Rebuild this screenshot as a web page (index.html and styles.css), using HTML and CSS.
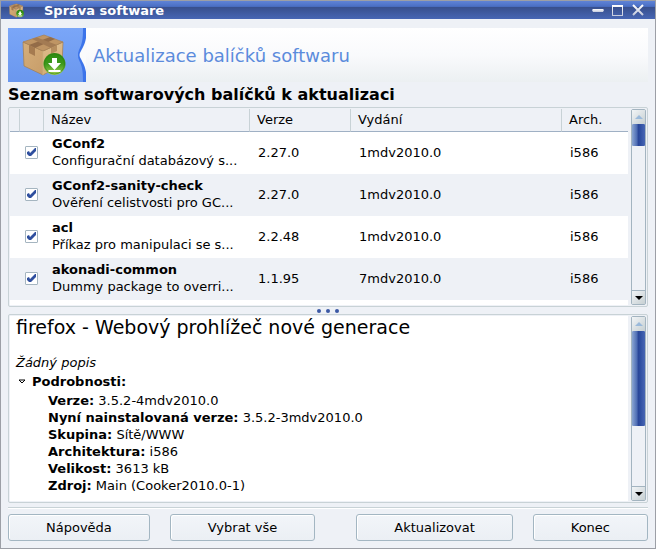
FILE: index.html
```html
<!DOCTYPE html>
<html lang="cs">
<head>
    <meta charset="UTF-8">
    <meta name="viewport" content="width=device-width, initial-scale=1.0">
    <title>Správa software</title>
    <link rel="stylesheet" href="styles.css">
</head>
<body>
    <svg class="defs" aria-hidden="true">
        <defs>
            <linearGradient id="leftSide" x1="0" y1="0" x2="1" y2="1">
                <stop offset="0" stop-color="#d5ae7a"/>
                <stop offset="1" stop-color="#c79d69"/>
            </linearGradient>
            <linearGradient id="rightSide" x1="0" y1="0" x2="0" y2="1">
                <stop offset="0" stop-color="#dcbb8b"/>
                <stop offset="1" stop-color="#d6ae78"/>
            </linearGradient>
            <linearGradient id="badge" x1="0" y1="0" x2="0" y2="1">
                <stop offset="0" stop-color="#2c8a12"/>
                <stop offset="0.5" stop-color="#3d9a1c"/>
                <stop offset="1" stop-color="#a4d052"/>
            </linearGradient>
            <linearGradient id="metal" x1="0" y1="0" x2="0" y2="1">
                <stop offset="0" stop-color="#ffffff"/>
                <stop offset="1" stop-color="#c3c9dc"/>
            </linearGradient>
        </defs>
        <symbol id="package" viewBox="0 0 44 42">
            <path d="M1 8 L21 17 V41 L2 32 Z" fill="url(#leftSide)" stroke="#a37c4c" stroke-width="0.7"/>
            <path d="M21 17 L41 8 L40 31 L21 41 Z" fill="url(#rightSide)" stroke="#a37c4c" stroke-width="0.7"/>
            <path d="M1 8 L22 1 L41 8 L21 17 Z" fill="#bf9564" stroke="#a98150" stroke-width="0.7"/>
            <path d="M7 11 L28 3 L33 5 L13 14 Z" fill="#936c48"/>
            <path d="M10 5 L15 3.500 L35 11 L29 14 Z" fill="#a37b53"/>
            <path d="M7 11 L13 14 V22 L7 19 Z" fill="#a57b50"/>
            <path d="M29 14 L35 11 V17 L29 20 Z" fill="#b58d5e"/>
            <path d="M21 17 V41" stroke="#ecd0a0" stroke-width="0.8"/>
            <circle cx="32.500" cy="30" r="11" fill="url(#badge)"/>
            <circle cx="32.500" cy="30" r="10" fill="none" stroke="#2f7d12" stroke-width="0.6"/>
            <path d="M30 24 H35 V29 H39 L32.500 36 L26 29 H30 Z" fill="#fff"/>
            <path d="M26.500 36 H38.500 V38 H26.500 Z" fill="#fff"/>
        </symbol>
    </svg>

    <div class="window">
        <header class="titlebar">
            <svg class="titlebar-icon" aria-hidden="true"><use href="#package"/></svg>
            <span class="titlebar-text">Správa software</span>
            <div class="window-controls">
                <button type="button" aria-label="Minimalizovat">
                    <svg viewBox="0 0 14 14"><path d="M2 6 H12 L13 7 L12 9 H2 L1 7 Z" fill="url(#metal)"/></svg>
                </button>
                <button type="button" aria-label="Maximalizovat">
                    <svg viewBox="0 0 14 14"><path d="M1 2 H12 V13 H1 Z M2 4 V12 H11 V4 Z" fill="url(#metal)" fill-rule="evenodd"/></svg>
                </button>
                <button type="button" aria-label="Zavřít">
                    <svg viewBox="0 0 14 14"><path d="M2 2 L12 12 M12 2 L2 12" stroke="url(#metal)" stroke-width="2"/></svg>
                </button>
            </div>
        </header>

        <main class="content">
            <div class="banner">
                <div class="banner-art">
                    <svg viewBox="0 0 78 54" aria-hidden="true">
                        <path d="M75 0 H78 V54 H75 C75 42 74 38 71 32 Q69 27 71 22 C74 16 75 12 75 0 Z" fill="#3c74ea"/>
                        <path d="M78 10 C77 16 75 19 73 23 Q70 27 73 31 C75 35 77 38 78 44 Z" fill="#fafbfc"/>
                        <use href="#package" x="14" y="6" width="44" height="42"/>
                    </svg>
                </div>
                <h1>Aktualizace balíčků softwaru</h1>
            </div>

            <h2 class="list-title">Seznam softwarových balíčků k aktualizaci</h2>

            <section class="pane">
                <div class="pane-view">
                    <table class="packages">
                        <colgroup>
                            <col class="col-expander">
                            <col class="col-check">
                            <col class="col-name">
                            <col class="col-version">
                            <col>
                            <col class="col-arch">
                        </colgroup>
                        <thead>
                            <tr>
                                <th></th>
                                <th></th>
                                <th>Název</th>
                                <th>Verze</th>
                                <th>Vydání</th>
                                <th>Arch.</th>
                            </tr>
                        </thead>
                        <tbody>
                            <tr>
                                <td></td>
                                <td><input type="checkbox" id="gconf2" checked></td>
                                <td><label for="gconf2"><strong>GConf2</strong>Configurační databázový s...</label></td>
                                <td>2.27.0</td>
                                <td>1mdv2010.0</td>
                                <td>i586</td>
                            </tr>
                            <tr>
                                <td></td>
                                <td><input type="checkbox" id="sanity" checked></td>
                                <td><label for="sanity"><strong>GConf2-sanity-check</strong>Ověření celistvosti pro GC...</label></td>
                                <td>2.27.0</td>
                                <td>1mdv2010.0</td>
                                <td>i586</td>
                            </tr>
                            <tr>
                                <td></td>
                                <td><input type="checkbox" id="acl" checked></td>
                                <td><label for="acl"><strong>acl</strong>Příkaz pro manipulaci se s...</label></td>
                                <td>2.2.48</td>
                                <td>1mdv2010.0</td>
                                <td>i586</td>
                            </tr>
                            <tr>
                                <td></td>
                                <td><input type="checkbox" id="akonadi" checked></td>
                                <td><label for="akonadi"><strong>akonadi-common</strong>Dummy package to overri...</label></td>
                                <td>1.1.95</td>
                                <td>7mdv2010.0</td>
                                <td>i586</td>
                            </tr>
                        </tbody>
                    </table>
                </div>
                <div class="scrollbar">
                    <button type="button" class="scroll-up" aria-label="Nahoru"></button>
                    <div class="scroll-track"><div class="scroll-thumb" style="height: 13%"></div></div>
                    <button type="button" class="scroll-down" aria-label="Dolů"></button>
                </div>
            </section>

            <div class="splitter"><i></i><i></i><i></i></div>

            <section class="pane pane-details">
                <div class="pane-view description">
                    <h3>firefox - Webový prohlížeč nové generace</h3>
                    <p><em>Žádný popis</em></p>
                    <details open>
                        <summary>Podrobnosti:</summary>
                        <ul>
                            <li><strong>Verze:</strong> 3.5.2-4mdv2010.0</li>
                            <li><strong>Nyní nainstalovaná verze:</strong> 3.5.2-3mdv2010.0</li>
                            <li><strong>Skupina:</strong> Sítě/WWW</li>
                            <li><strong>Architektura:</strong> i586</li>
                            <li><strong>Velikost:</strong> 3613 kB</li>
                            <li><strong>Zdroj:</strong> Main (Cooker2010.0-1)</li>
                        </ul>
                    </details>
                </div>
                <div class="scrollbar">
                    <button type="button" class="scroll-up" aria-label="Nahoru"></button>
                    <div class="scroll-track"><div class="scroll-thumb" style="height: 61%"></div></div>
                    <button type="button" class="scroll-down" aria-label="Dolů"></button>
                </div>
            </section>

            <footer class="actions">
                <button type="button" class="btn">Nápověda</button>
                <button type="button" class="btn">Vybrat vše</button>
                <button type="button" class="btn btn-update">Aktualizovat</button>
                <button type="button" class="btn">Konec</button>
            </footer>
        </main>
    </div>
</body>
</html>
```
FILE: styles.css
```css
* {
    margin: 0;
    padding: 0;
    box-sizing: border-box;
}

body {
    font-family: 'DejaVu Sans', sans-serif;
    font-size: 13px;
    line-height: 17px;
    color: #000;
    background-color: #eef1f6;
}

button {
    font: inherit;
    color: inherit;
}

.defs {
    position: absolute;
    width: 0;
    height: 0;
}

.window {
    display: flex;
    flex-direction: column;
    min-height: 100vh;
    border: 1px solid #9c9fa6;
}

/* Title bar */
.titlebar {
    display: flex;
    align-items: center;
    height: 18px;
    padding: 0 10px 0 8px;
    color: #fff;
    background: linear-gradient(#5f83d6 0, #4a6fc4 30%, #38508e 36%, #4766b4 100%);
}

.titlebar-icon {
    width: 15px;
    height: 15px;
    margin-right: 20px;
}

.titlebar-text {
    font-size: 13px;
    font-weight: bold;
}

.window-controls {
    display: flex;
    gap: 6px;
    margin-left: auto;
}

.window-controls button {
    width: 14px;
    height: 14px;
    border: none;
    background: none;
}

.window-controls svg {
    display: block;
    width: 14px;
    height: 14px;
}

.content {
    flex: 1;
    display: flex;
    flex-direction: column;
    padding: 9px 7px 7px;
}

/* Banner */
.banner {
    display: flex;
    align-items: center;
    height: 54px;
    background: linear-gradient(#fff, #f9fafc 50%, #ecf0f2);
}

.banner-art {
    width: 78px;
    height: 54px;
    background: linear-gradient(#7aa6f8, #6a97ee);
}

.banner-art svg {
    display: block;
    width: 78px;
    height: 54px;
}

.banner h1 {
    padding-left: 7px;
    font-size: 18px;
    font-weight: normal;
    color: #5b8bdc;
}

.list-title {
    font-size: 16px;
    line-height: 25px;
}

/* Framed panes with scrollbar */
.pane {
    display: flex;
    gap: 3px;
    padding: 1px;
    border: 1px solid #c8d2d6;
    border-radius: 2px;
}

.pane-view {
    flex: 1;
    padding-bottom: 5px;
    background-color: #fff;
}

.pane-details {
    flex: 1;
}

.packages {
    width: 100%;
    table-layout: fixed;
    border-collapse: separate;
    border-spacing: 0;
}

.col-expander {
    width: 9px;
}

.col-check {
    width: 24px;
}

.col-name {
    width: 206px;
}

.col-version {
    width: 101px;
}

.col-arch {
    width: 67px;
}

.packages th {
    height: 23px;
    padding: 0 0 2px 7px;
    font-weight: normal;
    text-align: left;
    background-color: #eef1f6;
    border-left: 1px solid #c8d2d6;
    border-bottom: 1px solid #9fb0c4;
}

.packages th:first-child {
    padding: 0;
    border-left: none;
}

.packages td {
    height: 42px;
    padding: 0 0 2px 9px;
    white-space: nowrap;
}

.packages td:nth-child(-n+2) {
    padding-left: 0;
}

.packages td:nth-child(2) {
    text-align: center;
}

.packages tbody tr:nth-child(even) {
    background-color: #eef1f6;
}

.packages label strong {
    display: block;
}

.packages input {
    appearance: none;
    display: block;
    width: 13px;
    height: 13px;
    margin: 0 auto;
    border: 1px solid #a5b5c0;
    border-radius: 1px;
    background-color: #fff;
}

.packages input:checked {
    background-image: url("data:image/svg+xml,%3Csvg xmlns='http://www.w3.org/2000/svg' viewBox='0 0 11 11'%3E%3Cpath d='M1 5 L3 4 L4 6 L9 1 L10 1 V4 L5 9 H3 L1 7 Z' fill='%232f4f9f'/%3E%3C/svg%3E");
}

/* Scrollbar */
.scrollbar {
    display: flex;
    flex-direction: column;
    width: 15px;
    border: 1px solid #a3b4c0;
    border-radius: 2px;
}

.scrollbar button {
    display: flex;
    align-items: center;
    justify-content: center;
    height: 14px;
    border: none;
    background: linear-gradient(135deg, #f2f5f7, #c6cfd2);
}

.scroll-up::before {
    content: '';
    border: 4px solid transparent;
    border-top: none;
    border-bottom-color: #9bbadb;
}

.scroll-down::before {
    content: '';
    border: 4px solid transparent;
    border-bottom: none;
    border-top-color: #000;
}

.scrollbar .scroll-down {
    border-top: 1px solid #a3b4c0;
}

.scroll-track {
    flex: 1;
}

.scroll-thumb {
    border-radius: 1px;
    background: linear-gradient(to right, #8ba6d2, #5271b6 35%, #2a4799 50%, #2f4fa2 65%, #4766b4);
}

.splitter {
    display: flex;
    align-items: center;
    justify-content: center;
    gap: 5px;
    height: 7px;
}

.splitter i {
    width: 4px;
    height: 4px;
    border-radius: 2px;
    background-color: #3a58a5;
}

/* Description */
.description {
    padding: 0 6px 5px;
}

.description h3 {
    font-size: 19px;
    font-weight: normal;
    line-height: 22px;
}

.description p {
    margin-top: 16px;
}

.description summary {
    display: flex;
    align-items: center;
    gap: 6px;
    margin: 2px 0;
    padding-left: 2px;
    font-weight: bold;
    list-style: none;
}

.description summary::before {
    content: '';
    width: 8px;
    height: 5px;
    background: url("data:image/svg+xml,%3Csvg xmlns='http://www.w3.org/2000/svg' viewBox='0 0 8 5'%3E%3Cpath d='M1 1 H7 L4 4 Z' fill='%23fff' stroke='%23000'/%3E%3C/svg%3E");
}

.description ul {
    padding-left: 32px;
    list-style: none;
}

/* Bottom buttons */
.actions {
    display: flex;
    gap: 20px;
    margin-top: 4px;
    padding-top: 6px;
    border-top: 1px solid #c8d2d6;
    box-shadow: inset 0 1px #fff;
}

.btn {
    height: 27px;
    padding: 0 37px;
    border: 1px solid #a3b6c2;
    border-radius: 3px;
    background: linear-gradient(#f2f5f9, #ebeff4);
    box-shadow: inset 1px 1px #fff;
}

.btn-update {
    margin-left: auto;
}
```
